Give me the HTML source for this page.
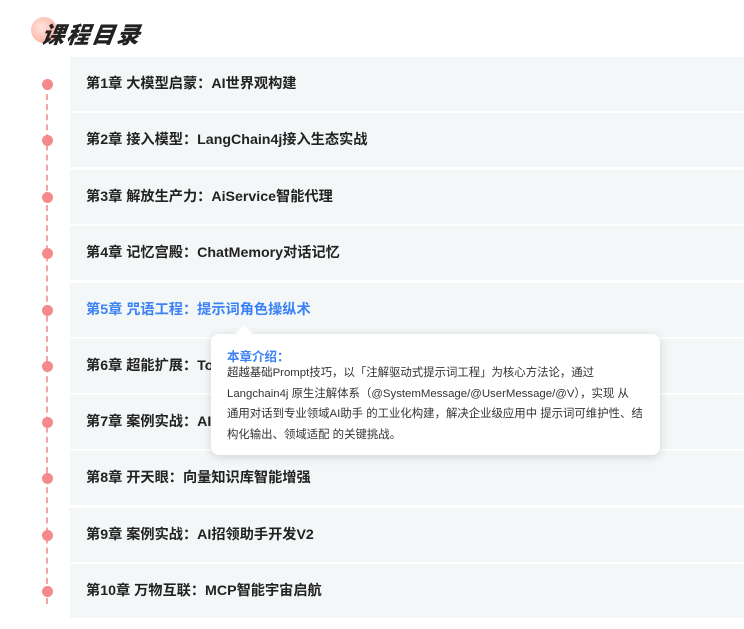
<!DOCTYPE html>
<html><head><meta charset="utf-8"><style>
body{margin:0;width:744px;height:629px;background:#fff;font-family:"Liberation Sans","Noto Sans CJK SC",sans-serif;position:relative;overflow:hidden}
.title{position:absolute;left:42px;top:16px;font-size:23px;font-weight:900;font-style:italic;color:#222;letter-spacing:2px;transform:skewX(-8deg)}
.circ{position:absolute;left:31px;top:17px;width:26px;height:26px;border-radius:50%;background:radial-gradient(circle at 40% 40%,#ffe3dc,#fbb7a8 70%,#fff0 100%)}
.line{position:absolute;left:46px;top:84px;height:520px;border-left:2px dashed #f5a3a3}
.row{position:absolute;left:70px;width:674px;height:54px;background:#f4f7f8}
.row span{position:absolute;left:16px;top:16px;font-size:14.2px;font-weight:bold;color:#222;white-space:nowrap}
.dot{position:absolute;left:42px;width:11px;height:11px;border-radius:50%;background:#f58a8a}
.tip{position:absolute;left:211px;top:334px;width:449px;height:121px;background:#fff;border-radius:8px;box-shadow:0 2px 10px rgba(0,0,0,.15)}
.tip:before{content:"";position:absolute;left:24px;top:-9px;border:9px solid transparent;border-top:0;border-bottom-color:#fff}
.tip h4{margin:0;position:absolute;left:16px;top:12px;font-size:12.5px;color:#3b82f6}
.tip p{margin:0;position:absolute;left:16px;top:29px;font-size:11.4px;line-height:20.7px;color:#333;white-space:nowrap}
</style></head><body>
<div class="circ"></div><div class="title">课程目录</div>
<div class="line"></div>
<div class="row" style="top:57px"><span>第1章 大模型启蒙：AI世界观构建</span></div>
<div class="row" style="top:113px"><span>第2章 接入模型：LangChain4j接入生态实战</span></div>
<div class="row" style="top:170px"><span>第3章 解放生产力：AiService智能代理</span></div>
<div class="row" style="top:226px"><span>第4章 记忆宫殿：ChatMemory对话记忆</span></div>
<div class="row" style="top:283px"><span style="color:#3b82f6">第5章 咒语工程：提示词角色操纵术</span></div>
<div class="row" style="top:339px"><span>第6章 超能扩展：Tools</span></div>
<div class="row" style="top:395px"><span>第7章 案例实战：AI</span></div>
<div class="row" style="top:451px"><span>第8章 开天眼：向量知识库智能增强</span></div>
<div class="row" style="top:508px"><span>第9章 案例实战：AI招领助手开发V2</span></div>
<div class="row" style="top:564px"><span>第10章 万物互联：MCP智能宇宙启航</span></div>
<div class="dot" style="top:79px"></div><div class="dot" style="top:135px"></div><div class="dot" style="top:192px"></div><div class="dot" style="top:248px"></div><div class="dot" style="top:305px"></div><div class="dot" style="top:361px"></div><div class="dot" style="top:417px"></div><div class="dot" style="top:473px"></div><div class="dot" style="top:530px"></div><div class="dot" style="top:586px"></div>
<div class="tip"><h4>本章介绍：</h4><p>超越基础Prompt技巧，以「注解驱动式提示词工程」为核心方法论，通过<br>Langchain4j 原生注解体系（@SystemMessage/@UserMessage/@V），实现 从<br>通用对话到专业领域AI助手 的工业化构建，解决企业级应用中 提示词可维护性、结<br>构化输出、领域适配 的关键挑战。</p></div>
</body></html>
